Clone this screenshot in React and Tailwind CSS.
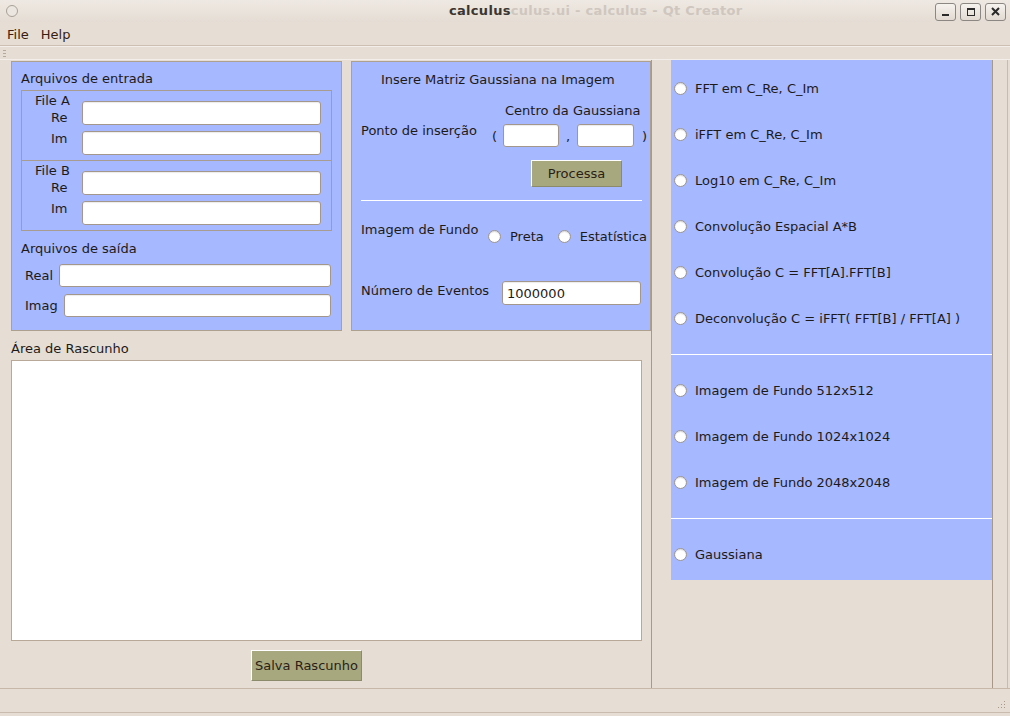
const Field = ({ className = "", children }) => (
  <div
    className={`bg-white border border-[#a3968a] rounded-[3px] shadow-[inset_0_1px_1px_rgba(0,0,0,0.08)] flex items-center pl-[4px] ${className}`}
  >
    {children}
  </div>
);

const Radio = () => (
  <span className="inline-block w-[13px] h-[13px] shrink-0 rounded-full bg-white border border-[#9c948c] shadow-[inset_0_1px_1px_rgba(0,0,0,0.15)]" />
);

const Button = ({ className = "", children }) => (
  <div
    className={`flex items-center justify-center bg-[#a8a87f] border border-t-white border-l-white border-b-[#8b8b6b] border-r-[#8b8b6b] text-[#2a1f16] ${className}`}
  >
    {children}
  </div>
);

const RadioRow = ({ label }) => (
  <div className="h-[46px] flex items-center gap-[8px] pl-[3px]">
    <Radio />
    <span className="pt-[1px]">{label}</span>
  </div>
);

const WinButton = ({ children }) => (
  <div className="w-[21px] h-[18px] rounded-[3px] border border-[#8c8782] bg-gradient-to-b from-[#f6f2ee] to-[#e2dad2] flex items-center justify-center">
    {children}
  </div>
);

export default function App() {
  return (
    <div className="w-[1010px] h-[716px] bg-[#e6ded5] flex flex-col overflow-hidden text-[13px] leading-[16px] text-[#1e1a17] font-['DejaVu_Sans',sans-serif]">
      {/* Title bar */}
      <div className="h-[22px] shrink-0 flex items-center bg-gradient-to-b from-[#efe9e3] to-[#e5ddd4]">
        <span className="ml-[6px] w-[12px] h-[12px] rounded-full border border-[#a8a098] bg-[#ece6e0]" />
        <div className="ml-[431px] font-bold text-[13px] tracking-[0.3px]">
          <span className="text-[#3a3632]">calculus</span>
          <span className="text-[#cfc7bf]">culus.ui - calculus - Qt Creator</span>
        </div>
        <div className="ml-auto mr-[4px] flex gap-[4px] mt-[1px]">
          <WinButton>
            <span className="w-[7px] h-[2px] bg-[#2a2a2a] mt-[6px]" />
          </WinButton>
          <WinButton>
            <span className="w-[8px] h-[8px] border border-[#2a2a2a] border-t-2" />
          </WinButton>
          <WinButton>
            <svg width="9" height="9" viewBox="0 0 9 9">
              <path d="M1 1 L8 8 M8 1 L1 8" stroke="#2a2a2a" strokeWidth="2" />
            </svg>
          </WinButton>
        </div>
      </div>

      {/* Menu bar */}
      <div className="h-[24px] shrink-0 flex items-center gap-[12px] px-[7px] pt-[2px] border-b border-[#cdbfb1] text-[#3a1c10]">
        <span>File</span>
        <span>Help</span>
      </div>

      {/* Toolbar */}
      <div className="h-[14px] shrink-0 flex items-center pl-[3px] border-t border-[#f3eee9] border-b border-[#b9a999]">
        <div className="flex flex-col gap-[2px]">
          <span className="w-[3px] h-[1px] bg-[#b5a999]" />
          <span className="w-[3px] h-[1px] bg-[#b5a999]" />
          <span className="w-[3px] h-[1px] bg-[#b5a999]" />
        </div>
      </div>

      {/* Main */}
      <div className="flex-1 min-h-0 flex">
        {/* Left column */}
        <div className="w-[651px] shrink-0 pl-[11px] pt-[1px] flex flex-col">
          <div className="flex gap-[9px] h-[270px]">
            {/* Panel 1 */}
            <div className="w-[331px] bg-[#a6b8ff] border border-[#ada08f] flex flex-col">
              <div className="pl-[9px] pt-[9px]">Arquivos de entrada</div>
              <div className="ml-[9px] mt-[3px] w-[311px] border border-[#a89c90] flex flex-col">
                {["A", "B"].map((f, i) => (
                  <div
                    key={f}
                    className={`flex ${i === 1 ? "border-t border-[#a89c90] h-[70px]" : "h-[69px]"}`}
                  >
                    <div className="w-[60px] pl-[13px] flex flex-col">
                      <span className="mt-[2px] h-[16px]">File {f}</span>
                      <span className="mt-[1px] h-[16px] pl-[16px]">Re</span>
                      <span className="mt-[5px] h-[16px] pl-[16px]">Im</span>
                    </div>
                    <div className="flex flex-col gap-[6px] pt-[10px]">
                      <Field className="w-[239px] h-[24px]" />
                      <Field className="w-[239px] h-[24px]" />
                    </div>
                  </div>
                ))}
              </div>
              <div className="pl-[9px] mt-[10px]">Arquivos de saída</div>
              <div className="mt-[7px] pl-[13px] pr-[10px] flex items-center gap-[6px]">
                <span className="pt-[1px]">Real</span>
                <Field className="flex-1 h-[23px]" />
              </div>
              <div className="mt-[7px] pl-[13px] pr-[10px] flex items-center gap-[6px]">
                <span className="pt-[1px]">Imag</span>
                <Field className="flex-1 h-[23px]" />
              </div>
            </div>

            {/* Panel 2 */}
            <div className="w-[300px] bg-[#a6b8ff] border border-[#ada08f] flex flex-col">
              <div className="pl-[29px] mt-[10px]">Insere Matriz Gaussiana na Imagem</div>
              <div className="pl-[153px] mt-[15px]">Centro da Gaussiana</div>
              <div className="mt-[3px] pl-[9px] flex items-start">
                <span className="w-[131px] mt-[1px]">Ponto de inserção</span>
                <span className="w-[11px] mt-[7px]">(</span>
                <Field className="w-[56px] h-[23px] mt-[2px]" />
                <span className="w-[18px] mt-[7px] text-center">,</span>
                <Field className="w-[57px] h-[23px] mt-[2px]" />
                <span className="ml-[8px] mt-[7px]">)</span>
              </div>
              <Button className="ml-[179px] mt-[13px] w-[91px] h-[27px]">Processa</Button>
              <div className="ml-[9px] mt-[13px] w-[281px] h-[1px] bg-white" />
              <div className="mt-[21px] pl-[9px] flex items-start">
                <span className="w-[127px]">Imagem de Fundo</span>
                <div className="flex items-center mt-[6px]">
                  <Radio />
                  <span className="ml-[9px] pt-[1px]">Preta</span>
                  <span className="ml-[14px] flex">
                    <Radio />
                  </span>
                  <span className="ml-[9px] pt-[1px] whitespace-nowrap">Estatística</span>
                </div>
              </div>
              <div className="mt-[36px] pl-[9px] flex items-start">
                <span className="w-[141px] mt-[2px]">Número de Eventos</span>
                <Field className="w-[139px] h-[24px] pt-[1px]">1000000</Field>
              </div>
            </div>
          </div>

          <div className="mt-[10px]">Área de Rascunho</div>
          <div className="mt-[3px] w-[631px] h-[281px] bg-white border border-[#b8a898]" />
          <Button className="ml-[240px] mt-[9px] w-[111px] h-[31px] pt-[1px]">Salva Rascunho</Button>
        </div>

        {/* Right column */}
        <div className="flex-1 flex border-l border-[#a8998a] pl-[19px] border-r border-r-[#c9bcae] mr-[2px]">
          <div className="w-[322px] h-full border-r border-[#a89888]">
            <div className="w-[321px] bg-[#a6b8ff]">
              <div className="pt-[5px] pb-[13px]">
                <RadioRow label="FFT em C_Re, C_Im" />
                <RadioRow label="iFFT em C_Re, C_Im" />
                <RadioRow label="Log10 em C_Re, C_Im" />
                <RadioRow label="Convolução Espacial A*B" />
                <RadioRow label="Convolução C = FFT[A].FFT[B]" />
                <RadioRow label="Deconvolução C = iFFT( FFT[B] / FFT[A] )" />
              </div>
              <div className="h-[1px] bg-white" />
              <div className="pt-[12px] pb-[13px]">
                <RadioRow label="Imagem de Fundo 512x512" />
                <RadioRow label="Imagem de Fundo 1024x1024" />
                <RadioRow label="Imagem de Fundo 2048x2048" />
              </div>
              <div className="h-[1px] bg-white" />
              <div className="pt-[12px] pb-[3px]">
                <RadioRow label="Gaussiana" />
              </div>
            </div>
          </div>
        </div>
      </div>

      {/* Status bar */}
      <div className="h-[28px] shrink-0 border-t border-[#c6b7a8] flex flex-col">
        <div className="flex-1 flex justify-end items-end pr-[4px] pb-[3px]">
          <svg width="10" height="10" viewBox="0 0 10 10">
            {[
              [8, 2], [8, 5], [5, 5], [8, 8], [5, 8], [2, 8],
            ].map(([x, y]) => (
              <rect key={`${x}-${y}`} x={x} y={y} width="1" height="1" fill="#a89888" />
            ))}
          </svg>
        </div>
        <div className="h-[1px] bg-[#c9bcae] mb-[3px]" />
      </div>
    </div>
  );
}
